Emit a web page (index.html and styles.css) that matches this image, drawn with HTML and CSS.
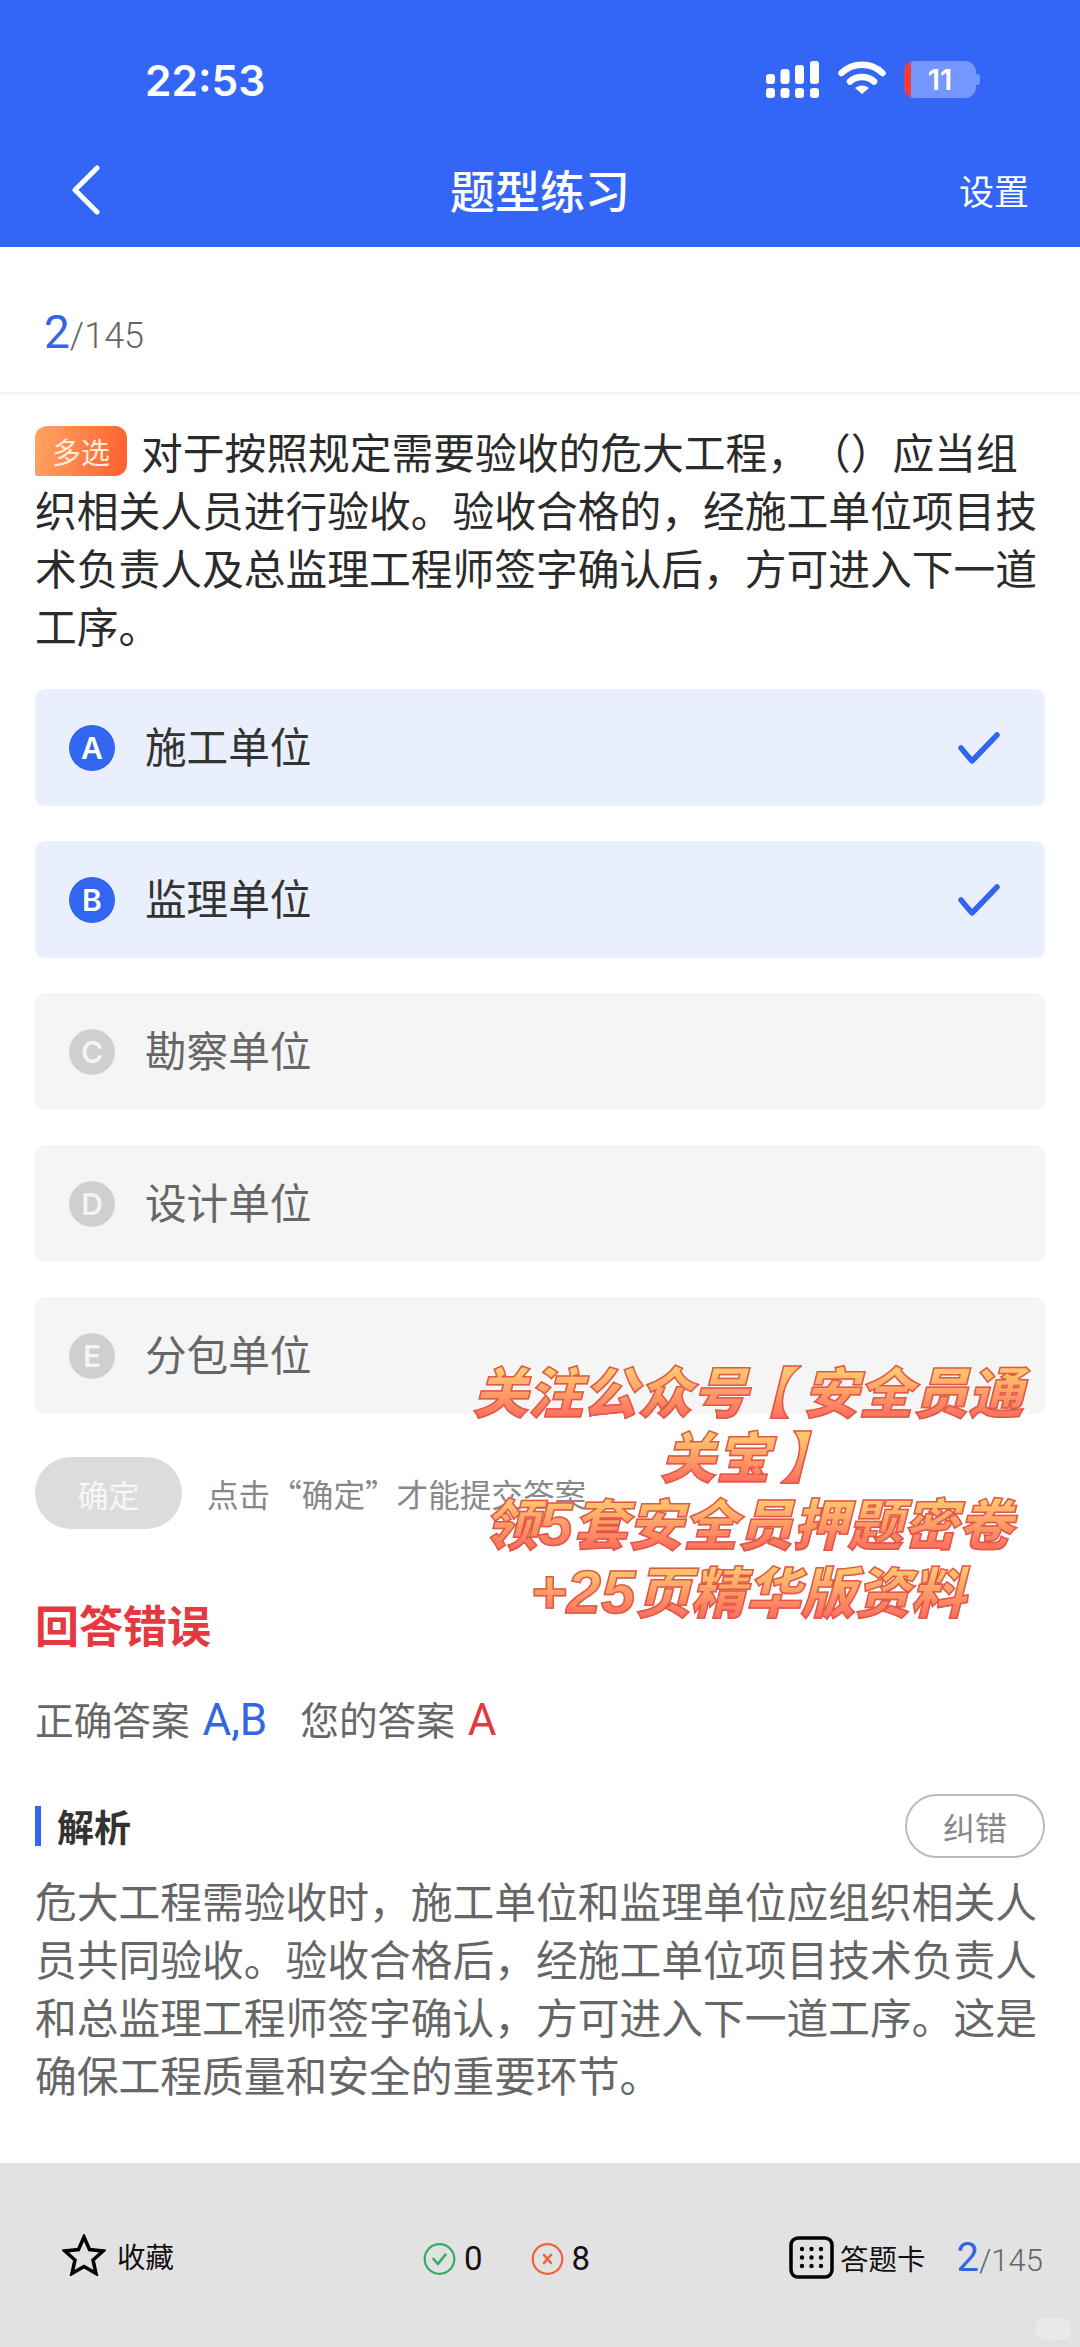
FILE: index.html
```html
<!DOCTYPE html>
<html lang="zh-CN">
<head>
    <meta charset="UTF-8">
    <meta name="viewport" content="width=device-width, initial-scale=1.0">
    <title>题型练习</title>
    <link rel="stylesheet" href="styles.css">
</head>
<body>
    <header class="topbar">
        <div class="statusbar">
            <span class="time">22:53</span>
            <div class="status-icons">
                <svg class="signal" width="54" height="37" viewBox="0 0 54 37" fill="#fff">
                    <rect x="0" y="13" width="9" height="10" rx="3"/>
                    <rect x="14.500" y="8" width="9" height="15" rx="3"/>
                    <rect x="29" y="4" width="9" height="19" rx="3"/>
                    <rect x="44" y="0" width="9" height="23" rx="3"/>
                    <rect x="0" y="27" width="9" height="10" rx="3"/>
                    <rect x="14.500" y="27" width="9" height="10" rx="3"/>
                    <rect x="29" y="27" width="9" height="10" rx="3"/>
                    <rect x="44" y="27" width="9" height="10" rx="3"/>
                </svg>
                <svg class="wifi" width="48" height="34" viewBox="0 0 48 34" fill="none" stroke="#fff" stroke-width="6.500" stroke-linecap="round">
                    <path d="M3.500 12 C15 1 33 1 44.500 12"/>
                    <path d="M12 20.500 C18.500 14.500 29.500 14.500 36 20.500"/>
                    <path d="M17 27 L24 33 L31 27 C27 23.500 21 23.500 17 27 Z" fill="#fff" stroke="none"/>
                </svg>
                <div class="battery">
                    <div class="battery-body">
                        <div class="battery-low"></div>
                        <span class="battery-num">11</span>
                    </div>
                    <div class="battery-nub"></div>
                </div>
            </div>
        </div>
        <nav class="navbar">
            <svg class="back" width="32" height="50" viewBox="0 0 32 50" fill="none" stroke="#fff" stroke-width="5" stroke-linecap="round" stroke-linejoin="round">
                <path d="M27 3 L5 25 L27 47"/>
            </svg>
            <h1 class="title">题型练习</h1>
            <span class="setting">设置</span>
        </nav>
    </header>

    <div class="progress">
        <span class="num-cur">2</span><span class="num-total">/145</span>
    </div>

    <main class="content">
        <p class="question"><span class="tag">多选</span>对于按照规定需要验收的危大工程&#65292;&#12288;&#65288;&#65289;应当组织相关人员进行验收。验收合格的&#65292;经施工单位项目技术负责人及总监理工程师签字确认后&#65292;方可进入下一道工序。</p>

        <div class="options">
            <div class="option selected">
                <span class="letter">A</span>
                <span class="option-text">施工单位</span>
                <svg class="check" width="44" height="34" viewBox="0 0 44 34" fill="none" stroke="#3366f0" stroke-width="5.500" stroke-linecap="round" stroke-linejoin="round">
                    <path d="M4 17 L15 30 L40 4"/>
                </svg>
            </div>
            <div class="option selected">
                <span class="letter">B</span>
                <span class="option-text">监理单位</span>
                <svg class="check" width="44" height="34" viewBox="0 0 44 34" fill="none" stroke="#3366f0" stroke-width="5.500" stroke-linecap="round" stroke-linejoin="round">
                    <path d="M4 17 L15 30 L40 4"/>
                </svg>
            </div>
            <div class="option">
                <span class="letter">C</span>
                <span class="option-text">勘察单位</span>
            </div>
            <div class="option">
                <span class="letter">D</span>
                <span class="option-text">设计单位</span>
            </div>
            <div class="option">
                <span class="letter">E</span>
                <span class="option-text">分包单位</span>
            </div>
        </div>

        <div class="submit-row">
            <button class="btn-ok">确定</button>
            <span class="hint">点击“确定”才能提交答案</span>
        </div>

        <h2 class="result">回答错误</h2>
        <p class="answers">正确答案 <span class="ans blue">A,B</span><span class="yours">您的答案 <span class="ans red">A</span></span></p>

        <div class="analysis-head">
            <h3 class="analysis-title">解析</h3>
            <span class="report">纠错</span>
        </div>
        <p class="analysis">危大工程需验收时&#65292;施工单位和监理单位应组织相关人员共同验收。验收合格后&#65292;经施工单位项目技术负责人和总监理工程师签字确认&#65292;方可进入下一道工序。这是确保工程质量和安全的重要环节。</p>
    </main>

    <footer class="footbar">
        <div class="foot-item fav">
            <svg width="44" height="42" viewBox="0 0 44 42" fill="none" stroke="#000" stroke-width="3.500" stroke-linejoin="miter">
                <path d="M22 3 L27.500 15.500 L41 17 L31 26 L34 39.500 L22 32.500 L10 39.500 L13 26 L3 17 L16.500 15.500 Z"/>
            </svg>
            <span>收藏</span>
        </div>
        <div class="foot-stats">
            <div class="foot-item">
                <svg width="33" height="32" viewBox="0 0 33 32" fill="none" stroke="#2fae66" stroke-width="2.200">
                    <circle cx="16.500" cy="16" r="14.800"/>
                    <path d="M10.500 16 L15 21 L22.500 11.500" stroke-linecap="round" stroke-linejoin="round" stroke-width="2.600"/>
                </svg>
                <span class="stat">0</span>
            </div>
            <div class="foot-item">
                <svg width="33" height="32" viewBox="0 0 33 32" fill="none" stroke="#f0603c" stroke-width="2.200">
                    <circle cx="16.500" cy="16" r="14.800"/>
                    <path d="M13 12 L20 20 M20 12 L13 20" stroke-linecap="round" stroke-width="2.600"/>
                </svg>
                <span class="stat">8</span>
            </div>
        </div>
        <div class="foot-right">
            <div class="foot-item card">
                <svg width="45" height="43" viewBox="0 0 45 43" fill="none">
                    <rect x="2" y="2" width="41" height="39" rx="7" stroke="#000" stroke-width="3.500"/>
                    <g fill="#000">
                        <circle cx="13" cy="13" r="2.200"/><circle cx="22.500" cy="13" r="2.200"/><circle cx="32" cy="13" r="2.200"/>
                        <circle cx="13" cy="21.500" r="2.200"/><circle cx="22.500" cy="21.500" r="2.200"/><circle cx="32" cy="21.500" r="2.200"/>
                        <circle cx="13" cy="30" r="2.200"/><circle cx="22.500" cy="30" r="2.200"/><circle cx="32" cy="30" r="2.200"/>
                    </g>
                </svg>
                <span>答题卡</span>
            </div>
            <div class="foot-progress">
                <span class="num-cur">2</span><span class="num-total">/145</span>
            </div>
        </div>
        <div class="corner-dot"></div>
    </footer>

    <!-- 水印文字 -->
    <div class="promo">
        <div class="promo-line">关注公众号<span class="bracket-open">【</span> 安全员通</div>
        <div class="promo-line">关宝 <span class="bracket-close">】</span></div>
        <div class="promo-line promo-low">领<span class="promo-num">5</span>套安全员押题密卷</div>
        <div class="promo-line promo-low"><span class="promo-num">+25</span>页精华版资料</div>
    </div>
</body>
</html>
```

FILE: styles.css
```css
* {
    box-sizing: border-box;
}
html, body {
    margin: 0;
    padding: 0;
}
body {
    position: relative;
    width: 1080px;
    height: 2347px;
    overflow: hidden;
    display: flex;
    flex-direction: column;
    background: #fff;
    font-family: "Noto Sans CJK SC", "Noto Sans", sans-serif;
    color: #2b2b2b;
}
h1, h2, h3, p {
    margin: 0;
}

/* 顶部 */
.topbar {
    height: 247px;
    background: #3366f6;
    color: #fff;
    flex: none;
}
.statusbar {
    height: 132px;
    padding: 60px 100px 0 145px;
    display: flex;
    justify-content: space-between;
    align-items: flex-start;
}
.time {
    font-family: Inter, sans-serif;
    font-size: 42.500px;
    font-weight: 600;
    line-height: 42px;
}
.status-icons {
    display: flex;
    align-items: flex-start;
    gap: 18px;
    margin-top: 1px;
}
.battery {
    display: flex;
    align-items: center;
}
.battery-body {
    position: relative;
    width: 72px;
    height: 37px;
    border-radius: 11px;
    background: #7596fb;
    overflow: hidden;
    display: flex;
    align-items: center;
    justify-content: center;
}
.battery-low {
    position: absolute;
    left: 0;
    top: 0;
    bottom: 0;
    width: 7px;
    background: #f03a3c;
}
.battery-num {
    font-family: Inter, sans-serif;
    font-size: 29px;
    font-weight: 600;
    color: #fff;
}
.battery-nub {
    width: 4px;
    height: 11px;
    border-radius: 0 3px 3px 0;
    background: #7596fb;
}
.navbar {
    height: 115px;
    padding: 0 51px;
    display: grid;
    grid-template-columns: 1fr auto 1fr;
    align-items: center;
}
.back {
    margin-left: 19px;
}
.title {
    font-size: 45px;
    font-weight: 500;
    line-height: 60px;
}
.setting {
    justify-self: end;
    font-size: 35px;
    line-height: 60px;
}

/* 进度 */
.progress {
    flex: none;
    height: 147px;
    padding: 60px 0 0 44px;
    border-bottom: 2px solid #f4f4f4;
    line-height: 50px;
}
.num-cur {
    font-family: Roboto, sans-serif;
    font-size: 46px;
    color: #3366e0;
}
.num-total {
    font-family: Roboto, sans-serif;
    font-weight: 300;
    font-size: 36px;
    color: #666;
}

/* 题目 */
.content {
    padding: 0 35px;
}
.question {
    margin-top: 28px;
    font-size: 41.75px;
    line-height: 58px;
    color: #2b2b2b;
}
.tag {
    display: inline-block;
    width: 92px;
    height: 50px;
    margin-right: 14px;
    border-radius: 12px 12px 12px 2px;
    background: linear-gradient(100deg, #ffa564, #ff5f2e);
    color: #ffeee0;
    font-size: 29px;
    line-height: 50px;
    text-align: center;
    vertical-align: 5px;
}

/* 选项 */
.options {
    margin-top: 35px;
    display: flex;
    flex-direction: column;
    gap: 35px;
}
.option {
    height: 117px;
    padding: 0 34px;
    border-radius: 10px;
    background: #f5f5f5;
    display: flex;
    align-items: center;
    color: #666;
}
.option.selected {
    background: #e9effd;
    color: #333;
}
.letter {
    width: 46px;
    height: 46px;
    border-radius: 50%;
    background: #cfcfcf;
    color: #f4f4f4;
    font-family: Inter, sans-serif;
    font-size: 30px;
    font-weight: 600;
    line-height: 46px;
    text-align: center;
    flex: none;
}
.selected .letter {
    background: #3366f0;
    color: #fff;
}
.option-text {
    margin-left: 30px;
    padding-bottom: 5px;
    font-size: 41.6px;
    flex: 1;
}
.check {
    margin-right: 10px;
}

/* 确定 */
.submit-row {
    margin-top: 43px;
    display: flex;
    align-items: center;
}
.btn-ok {
    width: 147px;
    height: 72px;
    border: none;
    border-radius: 36px;
    background: #dcdcdc;
    color: #f7f7f7;
    font-family: inherit;
    font-size: 31px;
}
.hint {
    margin-left: 25px;
    font-size: 31.600px;
    color: #888;
}

/* 结果 */
.result {
    margin-top: 65px;
    font-size: 44px;
    line-height: 60px;
    font-weight: 700;
    color: #e5383f;
}
.answers {
    margin-top: 34px;
    font-size: 38.7px;
    line-height: 60px;
    color: #666;
}
.ans {
    margin-left: 4px;
    font-family: Roboto, sans-serif;
    font-size: 44px;
}
.blue {
    color: #3366e0;
}
.red {
    color: #e5383f;
}
.yours {
    margin-left: 33px;
}
.analysis-head {
    margin-top: 44px;
    display: flex;
    align-items: center;
    justify-content: space-between;
}
.analysis-title {
    padding-left: 16px;
    border-left: 6px solid #3366f0;
    font-size: 37px;
    line-height: 40px;
    font-weight: 700;
    color: #333;
}
.report {
    width: 140px;
    height: 64px;
    border: 2px solid #bbb;
    border-radius: 32px;
    font-size: 32px;
    line-height: 60px;
    text-align: center;
    color: #888;
}
.analysis {
    margin-top: 13px;
    font-size: 41.75px;
    line-height: 58px;
    color: #666;
}

/* 底部 */
.footbar {
    position: relative;
    flex: none;
    margin-top: auto;
    height: 184px;
    padding: 0 35px 0 62px;
    background: #e2e2e2;
    display: flex;
    align-items: flex-start;
    color: #111;
}
.foot-item {
    display: flex;
    align-items: center;
    font-size: 28.500px;
    white-space: nowrap;
}
.fav {
    margin-top: 71px;
    gap: 11px;
    width: 361px;
}
.foot-stats {
    margin-top: 76px;
    width: 366px;
    display: flex;
    gap: 48px;
}
.stat {
    margin-left: 8px;
    font-family: Roboto, sans-serif;
    font-size: 33px;
}
.foot-right {
    margin-top: 71px;
    display: flex;
    align-items: center;
}
.card {
    gap: 6px;
}
.foot-progress {
    margin-left: 31px;
    white-space: nowrap;
}
.foot-progress .num-cur {
    font-size: 40px;
}
.foot-progress .num-total {
    font-size: 31px;
}
.corner-dot {
    position: absolute;
    right: 9px;
    bottom: 7px;
    width: 36px;
    height: 22px;
    border-radius: 10px;
    background: #e9e9e9;
}

/* 水印 */
.promo {
    position: absolute;
    left: 460px;
    top: 1362px;
    width: 576px;
    text-align: center;
}
.promo-line {
    font-family: "Liberation Sans", "Noto Sans CJK SC", sans-serif;
    font-size: 55px;
    line-height: 65px;
    font-weight: 900;
    font-style: italic;
    word-spacing: -15px;
    white-space: pre;
    background: linear-gradient(180deg, #ffc66e 15%, #ff6e5e 85%);
    -webkit-background-clip: text;
    background-clip: text;
    color: transparent;
    -webkit-text-stroke: 1.5px #e0584a;
}
.promo-low {
    margin-top: -1px;
    margin-bottom: 1px;
}
.promo-num {
    font-size: 62px;
}
.bracket-open {
    margin-left: -12px;
    margin-right: 12px;
}
.bracket-close {
    margin-left: 10px;
}
```
